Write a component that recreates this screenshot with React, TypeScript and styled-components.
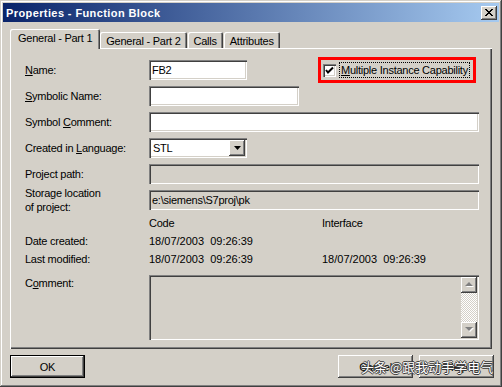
import React from "react";
import styled, { createGlobalStyle } from "styled-components";

const face = "#d4d0c8";
const raised = `inset -1px -1px #404040, inset 1px 1px #ffffff, inset -2px -2px #808080`;
const sunken = `inset 1px 1px #808080, inset 2px 2px #404040, inset -1px -1px #ffffff, inset -2px -2px ${face}`;

const GlobalStyle = createGlobalStyle`
  body {
    margin: 0;
    background: ${face};
    font-family: "Liberation Sans", Arial, sans-serif;
    font-size: 11px;
    color: #000;
  }
  * { box-sizing: border-box; }
`;

const Window = styled.div`
  width: 502px;
  height: 387px;
  padding: 3px;
  background: ${face};
  box-shadow: inset -1px -1px #404040, inset 1px 1px ${face},
    inset -2px -2px #808080, inset 2px 2px #ffffff;
  display: flex;
  flex-direction: column;
`;

const TitleBar = styled.div`
  height: 19px;
  display: flex;
  align-items: center;
  justify-content: space-between;
  padding: 0 2px 0 3px;
  background: linear-gradient(to right, #0a246a, #a6caf0);
  color: #fff;
  font-weight: 700;
  font-size: 11px;
  letter-spacing: 0.4px;
`;

const CloseButton = styled.div`
  width: 16px;
  height: 14px;
  background: ${face};
  box-shadow: ${raised};
  display: flex;
  align-items: center;
  justify-content: center;
`;

const Body = styled.div`
  padding: 7px 0 0 7px;
  display: flex;
  flex-direction: column;
  letter-spacing: -0.25px;
`;

const TabStrip = styled.div`
  display: flex;
  align-items: flex-end;
  height: 20px;
`;

const Tab = styled.div<{ active?: boolean }>`
  position: relative;
  z-index: ${({ active }) => (active ? 2 : 0)};
  height: ${({ active }) => (active ? 20 : 17)}px;
  padding: ${({ active }) => (active ? "0 8px 3px 8px" : "0 6px")};
  margin-right: ${({ active }) => (active ? 0 : 1)}px;
  display: flex;
  align-items: center;
  background: ${face};
  border-radius: 2px 2px 0 0;
  box-shadow: inset 1px 1px #ffffff, inset -1px 0 #404040, inset -2px 0 #808080;
  white-space: nowrap;
`;

const Panel = styled.div`
  position: relative;
  z-index: 1;
  width: 482px;
  height: 301px;
  margin-top: -1px;
  padding: 12px 13px 0 15px;
  background: ${face};
  box-shadow: inset 1px 1px #ffffff, inset -1px -1px #404040, inset -2px -2px #808080;
`;

const FormGrid = styled.div`
  display: grid;
  grid-template-columns: 124px 330px;
  grid-auto-rows: 20px;
  row-gap: 6px;
`;

const Label = styled.div<{ top?: boolean }>`
  align-self: ${({ top }) => (top ? "start" : "center")};
  line-height: 14px;
  padding-top: ${({ top }) => (top ? 1 : 0)}px;
  white-space: nowrap;
`;

const Field = styled.div<{ width?: number; disabled?: boolean }>`
  width: ${({ width }) => (width ? `${width}px` : "100%")};
  height: 20px;
  padding: 0 3px;
  display: flex;
  align-items: center;
  background: ${({ disabled }) => (disabled ? face : "#ffffff")};
  box-shadow: ${sunken};
  white-space: nowrap;
  overflow: hidden;
`;

const NameCell = styled.div`
  display: flex;
  align-items: center;
  justify-content: space-between;
  padding-right: 3px;
`;

const Highlight = styled.div`
  width: 158px;
  height: 26px;
  border: 3px solid #ff0000;
  display: flex;
  align-items: center;
  padding-left: 2px;
  gap: 3px;
`;

const CheckBox = styled.div`
  width: 13px;
  height: 13px;
  background: #fff;
  box-shadow: ${sunken};
  display: flex;
  align-items: center;
  justify-content: center;
`;

const FocusLabel = styled.div`
  border: 1px dotted #000;
  padding: 1px 1px 0 1px;
  line-height: 13px;
  white-space: nowrap;
`;

const Combo = styled(Field)`
  padding: 2px 2px 2px 4px;
  justify-content: space-between;
`;

const DropButton = styled.div`
  width: 16px;
  height: 16px;
  background: ${face};
  box-shadow: ${raised};
  display: flex;
  align-items: center;
  justify-content: center;
`;

const DateGrid = styled.div`
  display: grid;
  grid-template-columns: 124px 173px 1fr;
  grid-auto-rows: 18px;
  align-items: center;
  margin-top: 4px;
`;

const DateValue = styled.div`
  white-space: pre;
  letter-spacing: 0;
`;

const CommentRow = styled.div`
  display: grid;
  grid-template-columns: 124px 330px;
  margin-top: 7px;
`;

const CommentBox = styled.div`
  height: 65px;
  padding: 2px;
  background: ${face};
  box-shadow: ${sunken};
  display: flex;
  justify-content: flex-end;
`;

const ScrollBar = styled.div`
  width: 16px;
  display: flex;
  flex-direction: column;
  justify-content: space-between;
  background: repeating-conic-gradient(#ffffff 0 25%, ${face} 0 50%) 0 0 / 2px 2px;
`;

const ScrollArrow = styled.div`
  width: 16px;
  height: 16px;
  background: ${face};
  box-shadow: ${raised};
  display: flex;
  align-items: center;
  justify-content: center;
`;

const ButtonRow = styled.div`
  position: relative;
  width: 484px;
  margin-top: 6px;
  display: flex;
  justify-content: space-between;
`;

const ButtonGroup = styled.div`
  display: flex;
  gap: 6px;
`;

const Button = styled.div<{ isDefault?: boolean }>`
  width: 75px;
  height: 23px;
  display: flex;
  align-items: center;
  justify-content: center;
  background: ${face};
  box-shadow: ${({ isDefault }) =>
    isDefault
      ? `inset 0 0 0 1px #000, inset -2px -2px #404040, inset 2px 2px #ffffff, inset -3px -3px #808080`
      : raised};
`;

const Watermark = styled.div`
  position: absolute;
  left: 351px;
  top: 2px;
  font-family: "Noto Sans CJK SC", sans-serif;
  font-size: 13px;
  line-height: 19px;
  letter-spacing: 0;
  color: #ffffff;
  text-shadow: 1px 0 #3a3a3a, -1px 0 #3a3a3a, 0 1px #3a3a3a, 0 -1px #3a3a3a;
  white-space: nowrap;
`;

const Arrow = ({ up }: { up?: boolean }) => (
  <svg width="9" height="6" viewBox="0 0 9 6">
    <path
      d={up ? "M5 1 L9 5 L1 5 Z" : "M1 1 L9 1 L5 5 Z"}
      fill="#ffffff"
    />
    <path
      d={up ? "M4 0 L8 4 L0 4 Z" : "M0 0 L8 0 L4 4 Z"}
      fill="#808080"
    />
  </svg>
);

export default function App() {
  return (
    <>
      <GlobalStyle />
      <Window>
        <TitleBar>
          <span>Properties - Function Block</span>
          <CloseButton>
            <svg width="8" height="7" viewBox="0 0 8 7">
              <path d="M0 0 L7 7 M1 0 L8 7 M7 0 L0 7 M8 0 L1 7" stroke="#000" strokeWidth="1" />
            </svg>
          </CloseButton>
        </TitleBar>
        <Body>
          <TabStrip>
            <Tab active>General - Part 1</Tab>
            <Tab>General - Part 2</Tab>
            <Tab>Calls</Tab>
            <Tab>Attributes</Tab>
          </TabStrip>
          <Panel>
            <FormGrid>
              <Label>
                <u>N</u>ame:
              </Label>
              <NameCell>
                <Field width={98}>FB2</Field>
                <Highlight>
                  <CheckBox>
                    <svg width="9" height="9" viewBox="0 0 9 9">
                      <path d="M1 4 L3 6.5 L8 1.5" fill="none" stroke="#000" strokeWidth="2" />
                    </svg>
                  </CheckBox>
                  <FocusLabel>
                    <u>M</u>ultiple Instance Capability
                  </FocusLabel>
                </Highlight>
              </NameCell>
              <Label>
                <u>S</u>ymbolic Name:
              </Label>
              <Field width={150} />
              <Label>
                Symbol <u>C</u>omment:
              </Label>
              <Field />
              <Label>
                Created in <u>L</u>anguage:
              </Label>
              <Combo width={98}>
                <span>STL</span>
                <DropButton>
                  <svg width="7" height="4" viewBox="0 0 7 4">
                    <path d="M0 0 L7 0 L3.5 4 Z" fill="#000" />
                  </svg>
                </DropButton>
              </Combo>
              <Label>Project path:</Label>
              <Field disabled />
              <Label>
                Storage location
                <br />
                of project:
              </Label>
              <Field disabled>e:\siemens\S7proj\pk</Field>
            </FormGrid>
            <DateGrid>
              <span />
              <span>Code</span>
              <span>Interface</span>
              <Label>Date created:</Label>
              <DateValue>18/07/2003  09:26:39</DateValue>
              <span />
              <Label>Last modified:</Label>
              <DateValue>18/07/2003  09:26:39</DateValue>
              <DateValue>18/07/2003  09:26:39</DateValue>
            </DateGrid>
            <CommentRow>
              <Label top>
                C<u>o</u>mment:
              </Label>
              <CommentBox>
                <ScrollBar>
                  <ScrollArrow>
                    <Arrow up />
                  </ScrollArrow>
                  <ScrollArrow>
                    <Arrow />
                  </ScrollArrow>
                </ScrollBar>
              </CommentBox>
            </CommentRow>
          </Panel>
          <ButtonRow>
            <Button isDefault>OK</Button>
            <ButtonGroup>
              <Button>Cancel</Button>
              <Button>Help</Button>
            </ButtonGroup>
            <Watermark>头条 @跟我动手学电气</Watermark>
          </ButtonRow>
        </Body>
      </Window>
    </>
  );
}
